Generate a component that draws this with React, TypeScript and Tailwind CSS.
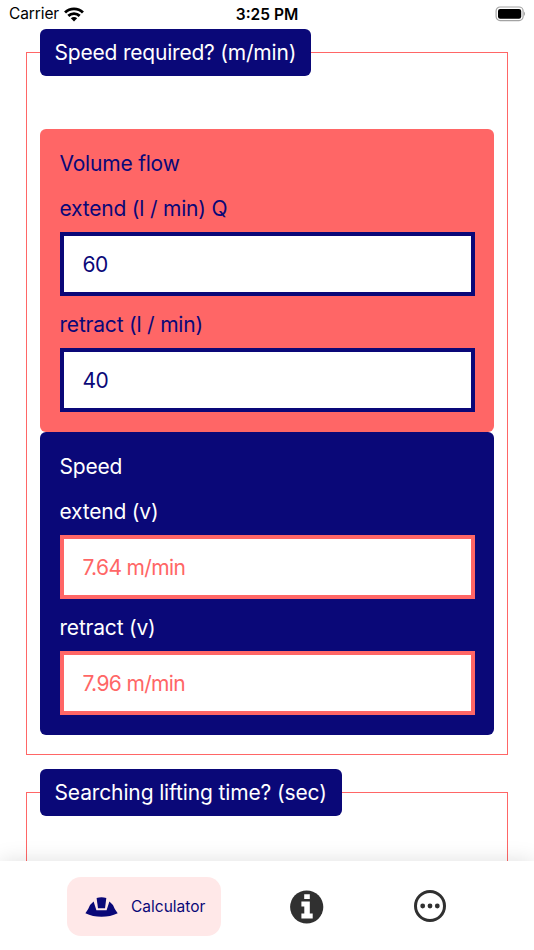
import React from 'react';
import clsx from 'clsx';

type FieldProps = {
  label: string;
  value: string;
  result?: boolean;
};

const Field = ({ label, value, result }: FieldProps) => {
  return (
    <label className="block">
      <span className="block h-[26px] leading-[26px]">{label}</span>
      <input
        readOnly
        value={value}
        className={clsx(
          'mt-[10px] block h-16 w-full border-4 bg-white pt-[2px] pr-5 pl-[19px] outline-none',
          result
            ? 'border-[#ff6666] tracking-[-0.64px] text-[#ff6666]'
            : 'border-[#0a0878] tracking-[-0.5px] text-[#0a0878]'
        )}
      />
    </label>
  );
};

type PanelProps = {
  title: string;
  className: string;
  children: React.ReactNode;
};

const Panel = ({ title, className, children }: PanelProps) => {
  return (
    <div className={clsx('rounded-md px-[19.5px] pt-[22px] pb-5 tracking-[-0.2px]', className)}>
      <h2 className="mb-[19px] h-[26px] leading-[26px]">{title}</h2>
      <div className="flex flex-col gap-4">{children}</div>
    </div>
  );
};

const Legend = ({ children, className }: { children: React.ReactNode; className: string }) => {
  return (
    <div
      className={clsx(
        '-mt-[24.5px] flex h-[47.5px] items-center rounded-md bg-[#0a0878] pl-[14.5px] whitespace-nowrap text-white',
        className
      )}>
      {children}
    </div>
  );
};

const StatusBar = () => {
  return (
    <header className="grid h-7 shrink-0 grid-cols-3 items-center px-[9px] text-black">
      <div className="flex items-center gap-[5px] text-[15.5px] tracking-[-0.1px]">
        Carrier
        <svg width="20" height="15" viewBox="0 0 19 14" fill="none" stroke="currentColor" strokeWidth="2.7">
          <path d="M1 5.1a12.2 12.2 0 0 1 17 0" />
          <path d="M4.1 8.3a7.8 7.8 0 0 1 10.8 0" />
          <path d="M9.5 13.6 6.5 10.6a4.3 4.3 0 0 1 6 0Z" fill="currentColor" stroke="none" />
        </svg>
      </div>
      <div className="pt-px text-center text-[15.5px] font-semibold">3:25 PM</div>
      <div className="flex justify-end">
        <svg width="32" height="16" viewBox="0 0 32 16">
          <rect x="3.1" y="1" width="27" height="13.6" rx="4" fill="none" stroke="#a3a3a3" strokeWidth="1.2" />
          <rect x="5" y="2.9" width="23.2" height="9.8" rx="2.2" fill="#000" />
          <path d="M31.2 5.6v4.4c.5-.4.8-1.2.8-2.2s-.3-1.8-.8-2.2Z" fill="#8a8a8a" />
        </svg>
      </div>
    </header>
  );
};

const HelmetIcon = () => (
  <svg width="33" height="20" viewBox="0 0 33 20" fill="currentColor">
    <path d="M11.6 1.1Q16.5-.5 21.3 1.1L20 11.2H13Z" />
    <path d="M8.6 4.6 11.4 13.2H21.6L24.4 4.6Q28.2 7.3 29.8 12L32.7 16.2Q25.3 19.7 16.5 19.7T.4 16.2L3.2 12Q4.8 7.3 8.6 4.6Z" />
  </svg>
);

const InfoIcon = () => (
  <svg width="34" height="34" viewBox="0 0 34 34">
    <circle cx="16.7" cy="17" r="16.6" fill="#303030" />
    <path d="M14.2 4.2h5.6v4.9h-5.6zM11.4 11.6h8.4v12h2.9v4.9H11.4v-4.9h2.9v-7.1h-2.9z" fill="#fff" />
  </svg>
);

const MoreIcon = () => (
  <svg width="32" height="32" viewBox="0 0 32 32" fill="#303030">
    <circle cx="16" cy="16" r="14.5" fill="none" stroke="#303030" strokeWidth="3" />
    <circle cx="8.7" cy="16" r="2.4" />
    <circle cx="16" cy="16" r="2.4" />
    <circle cx="23.3" cy="16" r="2.4" />
  </svg>
);

const App = () => {
  return (
    <div className="flex h-[950px] w-[534px] flex-col overflow-hidden bg-white font-['Inter',sans-serif] text-[21px]">
      <StatusBar />

      <main className="min-h-0 flex-1 overflow-hidden px-[26px] pt-6">
        <section className="h-[703px] border-[1.5px] border-[#ff6666] px-[13px]">
          <Legend className="w-[271px] tracking-[-0.2px]">Speed required? (m/min)</Legend>
          <div className="mt-[52.5px]">
            <Panel title="Volume flow" className="bg-[#ff6666] text-[#0a0878]">
              <Field label="extend (l / min) Q" value="60" />
              <Field label="retract (l / min)" value="40" />
            </Panel>
            <Panel title="Speed" className="bg-[#0a0878] text-white">
              <Field label="extend (v)" value="7.64 m/min" result />
              <Field label="retract (v)" value="7.96 m/min" result />
            </Panel>
          </div>
        </section>

        <section className="mt-[37px] h-[300px] border-[1.5px] border-[#ff6666] px-[13px]">
          <Legend className="w-[302px] tracking-[-0.13px]">Searching lifting time? (sec)</Legend>
        </section>
      </main>

      <nav className="relative flex h-[89px] shrink-0 items-start bg-white pt-4 shadow-[0_0_20px_rgba(0,0,0,0.13)]">
        <button className="ml-[67px] flex h-[59px] w-[154px] items-center gap-[13px] rounded-[14px] bg-[#ffe8e8] pl-[18px] text-[15.5px] text-[#0a0878]">
          <HelmetIcon />
          Calculator
        </button>
        <button className="mt-[13px] ml-[69px]">
          <InfoIcon />
        </button>
        <button className="mt-[13px] ml-[90px]">
          <MoreIcon />
        </button>
      </nav>
    </div>
  );
};

export default App;
